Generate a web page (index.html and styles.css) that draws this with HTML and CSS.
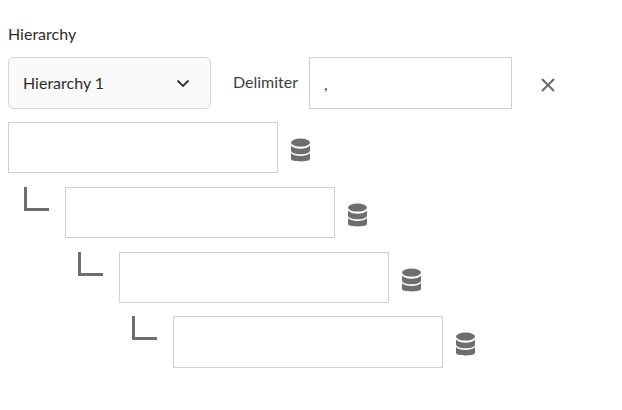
FILE: index.html
```html
<!DOCTYPE html>
<html lang="en">
<head>
  <meta charset="UTF-8" />
  <title>Hierarchy</title>
  <link rel="stylesheet" href="styles.css">
</head>
<body>
  <svg class="defs" width="0" height="0">
    <symbol id="db" viewBox="0 0 20 24">
      <ellipse cx="10" cy="4.200" rx="10" ry="4.200" />
      <path d="M0 7.200C2 9.700 6 10.600 10 10.600s8-.9 10-3.400V12.500c0 2.500-4.500 4-10 4S0 15 0 12.500z" />
      <path d="M0 15.200C2 17.700 6 18.200 10 18.200s8-.5 10-3V21.500c0 1.600-4.500 2.500-10 2.500S0 23.100 0 21.500z" />
    </symbol>
  </svg>
  <div class="panel">
    <div class="label">Hierarchy</div>
    <div class="top-row">
      <button class="select">
        <span class="select-text">Hierarchy 1</span>
        <svg class="chevron" viewBox="0 0 14 9"><path d="M1.500 1.500L7 7l5.500-5.500" /></svg>
      </button>
      <span class="delim-label">Delimiter</span>
      <input class="text-input delim" value="," />
      <svg class="close" viewBox="0 0 16 16"><path d="M2 2l12 12M14 2L2 14" /></svg>
    </div>
    <div class="tree">
      <div class="level level-0">
        <input class="text-input field" />
        <svg class="db"><use href="#db" /></svg>
      </div>
      <div class="level level-1">
        <span class="elbow"></span>
        <input class="text-input field" />
        <svg class="db"><use href="#db" /></svg>
      </div>
      <div class="level level-2">
        <span class="elbow"></span>
        <input class="text-input field" />
        <svg class="db"><use href="#db" /></svg>
      </div>
      <div class="level level-3">
        <span class="elbow"></span>
        <input class="text-input field" />
        <svg class="db"><use href="#db" /></svg>
      </div>
    </div>
  </div>
</body>
</html>
```

FILE: styles.css
```css
body {
  margin: 0;
  background: #fff;
  font-family: Lato, Arial, sans-serif;
  color: #2c2c2c;
}
.defs {
  position: absolute;
}
.panel {
  padding: 24px 8px 0 8px;
}
.label {
  font-size: 16px;
  line-height: 20px;
  margin-bottom: 13px;
}
.top-row {
  display: flex;
  align-items: center;
  height: 52px;
  margin-bottom: 13px;
}
.select {
  display: flex;
  justify-content: space-between;
  align-items: center;
  width: 203px;
  height: 52px;
  padding: 0 20px 0 14px;
  background: #fafafa;
  border: 1px solid #d5d5d5;
  border-radius: 6px;
  font: inherit;
  font-size: 16px;
  color: #2c2c2c;
}
.select-text {
  margin-bottom: 2px;
}
.chevron {
  width: 14px;
  height: 9px;
  fill: none;
  stroke: #333;
  stroke-width: 1.800;
}
.delim-label {
  width: 66px;
  font-size: 16px;
  margin: 0 10px 3px 22px;
  color: #404040;
}
.text-input {
  box-sizing: border-box;
  background: #fff;
  border: 1px solid #d0d0d0;
  border-radius: 0;
  font: inherit;
  font-size: 16px;
  color: #333;
  outline: none;
}
.delim {
  width: 203px;
  height: 52px;
  padding: 0 14px;
}
.close {
  width: 16px;
  height: 16px;
  margin: 4px 0 0 28px;
  fill: none;
  stroke: #6e6e6e;
  stroke-width: 2.200;
}
.tree {
  display: flex;
  flex-direction: column;
  gap: 13.400px;
}
.level {
  display: flex;
  align-items: flex-start;
}
.level-1 { padding-left: 16px; }
.level-2 { padding-left: 70px; }
.level-3 { padding-left: 124px; }
.elbow {
  box-sizing: border-box;
  width: 25px;
  height: 24px;
  margin-right: 16px;
  border-left: 3px solid #6e6e6e;
  border-bottom: 3px solid #6e6e6e;
}
.field {
  width: 270px;
  height: 51.400px;
}
.db {
  width: 19px;
  height: 24px;
  margin: 16px 0 0 13px;
  fill: #6e6e6e;
}
```
